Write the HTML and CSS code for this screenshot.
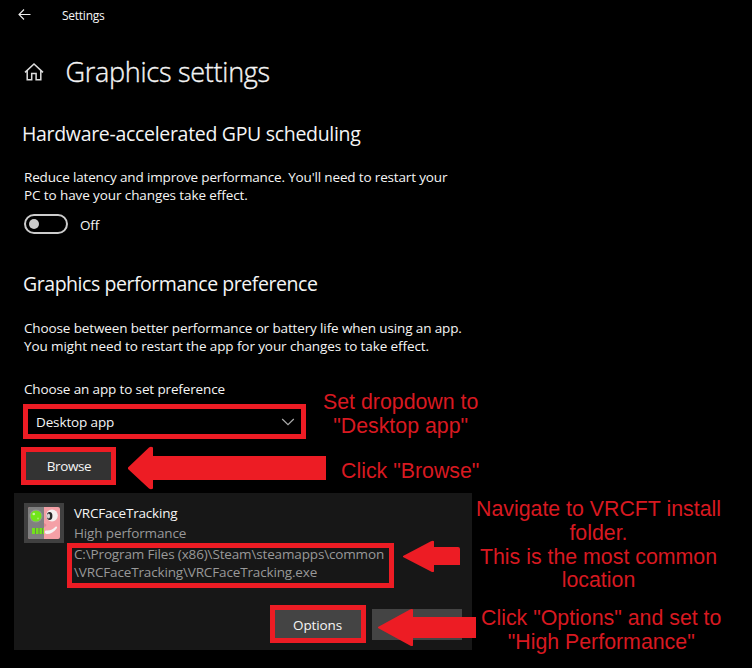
FILE: index.html
```html
<!DOCTYPE html>
<html lang="en">
<head>
<meta charset="utf-8">
<title>Settings</title>
<link rel="stylesheet" href="styles.css">
</head>
<body>
<main class="window">
  <header class="titlebar">
    <svg class="back" width="14" height="12" viewBox="0 0 14 12"><path d="M12.5 5.5H1M6 .5l-5 5 5 5"/></svg>
    <span class="window-name">Settings</span>
  </header>
  <div class="page-head">
    <svg class="home" width="20" height="20" viewBox="0 0 20 20"><path d="M1 10.400 10 2l9 8.400M3.200 8.600v9.100h4.500v-6.200h4.400v6.200h4.700V8.600"/></svg>
    <h1>Graphics settings</h1>
  </div>
  <section class="gpu">
    <h2 class="h-gpu">Hardware-accelerated GPU scheduling</h2>
    <p class="copy"><span class="l1">Reduce latency and improve performance. You'll need to restart your</span><br><span class="l2">PC to have your changes take effect.</span></p>
    <div class="switch-row"><span class="switch"><i></i></span><span class="off">Off</span></div>
  </section>
  <section class="pref">
    <h2 class="h-pref">Graphics performance preference</h2>
    <p class="copy"><span class="l3">Choose between better performance or battery life when using an app.</span><br><span class="l4">You might need to restart the app for your changes to take effect.</span></p>
    <div class="label">Choose an app to set preference</div>
    <div class="dropdown"><span>Desktop app</span>
      <svg width="14" height="8" viewBox="0 0 14 8"><path d="m1.200 1 5.800 5.600L12.800 1"/></svg>
    </div>
    <div class="button browse">Browse</div>
  </section>
  <article class="card">
    <div class="app">
      <div class="tile">
        <svg width="32" height="32" viewBox="0 0 32 32">
          <rect width="32" height="32" rx="2" fill="#f4a0a6"/>
          <path d="M2 0h14v32H2a2 2 0 0 1-2-2V2a2 2 0 0 1 2-2z" fill="#808080"/>
          <circle cx="8" cy="9" r="6.500" fill="#969696"/>
          <circle cx="8" cy="9" r="5.500" fill="#71e51a"/>
          <circle cx="5.800" cy="7" r="1.300" fill="#c8f5a0"/>
          <circle cx="10" cy="11.500" r="1" fill="#a7ee66"/>
          <ellipse cx="24" cy="8.500" rx="5.800" ry="6" fill="#f5f0f0"/>
          <ellipse cx="21.600" cy="9" rx="2.800" ry="4" fill="#292929"/>
          <ellipse cx="20.500" cy="9" rx="1.600" ry="2.500" fill="#d8d4d4"/>
          <path d="M16 16c2 1 3 2 2 3s-2 .8-2 .8z" fill="#e48791"/>
          <path d="M4 21h12v6H4z" fill="#73e01e"/>
          <path d="M7.500 21v6M11 21v6M14.500 21v6" stroke="#6c8a50"/>
          <path d="M18 23.500c4.500.5 7-1.500 9.500-3.800 1.300-.8 2.100.5 1.300 1.600C26 25.500 22 27.300 18.500 27c-2-.5-2.400-3-.5-3.500z" fill="#f6f1f1"/>
        </svg>
      </div>
      <div class="app-text">
        <div class="app-name">VRCFaceTracking</div>
        <div class="app-mode">High performance</div>
        <div class="path">C:\Program Files (x86)\Steam\steamapps\common<br>\VRCFaceTracking\VRCFaceTracking.exe</div>
      </div>
    </div>
    <div class="actions">
      <div class="button options">Options</div>
      <div class="button blank"></div>
    </div>
  </article>

  <svg class="arrows" width="752" height="668" viewBox="0 0 752 668">
    <path d="M128 467.500 149 447.500q2-1.500 4 0V456H326v24H153v8.500q-2 1.500-4 0L128 469z"/>
    <path d="M403 556 431 541.300q2-1 3 0V547h24q2 0 2 2v16H434v6.500q-1 1-3 0L403 557z"/>
    <path d="M378 627 410 609.500q2-1 3 0V617h63v21h-63v7.500q-1 1-3 0L378 628z"/>
  </svg>
  <div class="note note-dropdown">Set dropdown to<br>"Desktop app"</div>
  <div class="note note-browse">Click "Browse"</div>
  <div class="note note-path">Navigate to VRCFT install<br>folder.<br>This is the most common<br>location</div>
  <div class="note note-options">Click "Options" and set to<br>"High Performance"</div>
</main>
</body>
</html>
```
FILE: styles.css
```css
* { box-sizing: border-box; }
body { margin: 0; background: #000; }
.window {
  position: relative;
  width: 752px;
  height: 668px;
  overflow: hidden;
  background: #000;
  color: #f5f5f5;
  font: 13.5px/18px "Open Sans", "Noto Sans", sans-serif;
  letter-spacing: -.13px;
  white-space: nowrap;
}
svg { display: block; fill: none; }
h1, h2, p { margin: 0; font-weight: 400; }
.titlebar { display: flex; height: 32px; padding: 9px 0 0 18px; }
.back { stroke: #eee; stroke-width: 1.1; }
.window-name { margin: -2px 0 0 30px; font-size: 12px; letter-spacing: -.25px; }
.page-head { display: flex; align-items: flex-start; height: 89px; padding: 20px 0 0 24px; }
.home { margin-top: 10px; stroke: #ddd; stroke-width: 1.5; }
h1 {
  margin-left: 21.5px;
  font-size: 27px;
  line-height: 40px;
  font-weight: 300;
  letter-spacing: -.27px;
  -webkit-text-stroke: .35px #f5f5f5;
}
h2 { font-size: 19.500px; line-height: 26px; }
.h-gpu { margin-left: -1px; letter-spacing: -.31px; }
.h-pref { letter-spacing: -.45px; }
.gpu { height: 150px; padding-left: 23px; }
.copy { margin: 21px 0 0 1px; }
.l1 { letter-spacing: -.155px; }
.l2, .l4 { letter-spacing: -.1px; }
.switch-row { display: flex; margin: 10px 0 0 1px; }
.switch { width: 44px; height: 20px; border: 2px solid #ccc; border-radius: 10px; padding: 3px; }
.switch i { display: block; width: 10px; height: 10px; border-radius: 50%; background: #ccc; }
.off { margin: 2px 0 0 12px; }
.pref { height: 222px; padding-left: 23px; }
.pref .copy { margin-top: 22px; }
.label { margin: 25px 0 0 1px; }
.dropdown {
  display: flex;
  align-items: center;
  justify-content: space-between;
  width: 283px;
  height: 35px;
  margin-top: 6px;
  padding: 0 6px 0 8px;
  border: 5px solid #ed1c24;
}
.dropdown svg { stroke: #aaa; stroke-width: 1.2; }
.button { display: flex; align-items: center; justify-content: center; }
.browse {
  width: 95px;
  height: 38px;
  margin: 8px 0 0 -2px;
  padding-left: 1px;
  border: 5px solid #ed1c24;
  background: #333;
  letter-spacing: -.4px;
}
.card { width: 458px; height: 157px; margin-left: 14px; padding-top: 10px; background: #171717; }
.app { display: flex; height: 102px; padding-left: 10px; }
.tile { width: 40px; height: 40px; padding: 4px; background: #404040; }
.app-name { margin: 1px 0 0 10px; letter-spacing: -.2px; }
.app-mode { margin: 2px 0 0 10px; color: #999; }
.path {
  width: 327px;
  height: 45px;
  margin: 1px 0 0 3px;
  padding-left: 2px;
  border: 5px solid #ed1c24;
  color: #999;
  letter-spacing: -.15px;
}
.path::before { content: ""; display: block; margin-top: -3px; }
.actions { display: flex; align-items: flex-start; padding-left: 256px; }
.options { width: 96px; height: 38px; padding: 2px 1px 0 0; border: 5px solid #ed1c24; background: #444; }
.blank { width: 90px; height: 31px; margin: 4px 0 0 6px; background: #444; }
.arrows { position: absolute; left: 0; top: 0; fill: #ed1c24; }
.note {
  position: absolute;
  color: #d81920;
  font: 21.330px/24px "Liberation Sans", Arial, sans-serif;
  letter-spacing: 0;
  text-align: center;
}
.note-dropdown { left: 323px; top: 390px; }
.note-browse { left: 341px; top: 459px; }
.note-path { left: 476px; top: 498px; line-height: 23.8px; }
.note-options { left: 481px; top: 606px; }
```
